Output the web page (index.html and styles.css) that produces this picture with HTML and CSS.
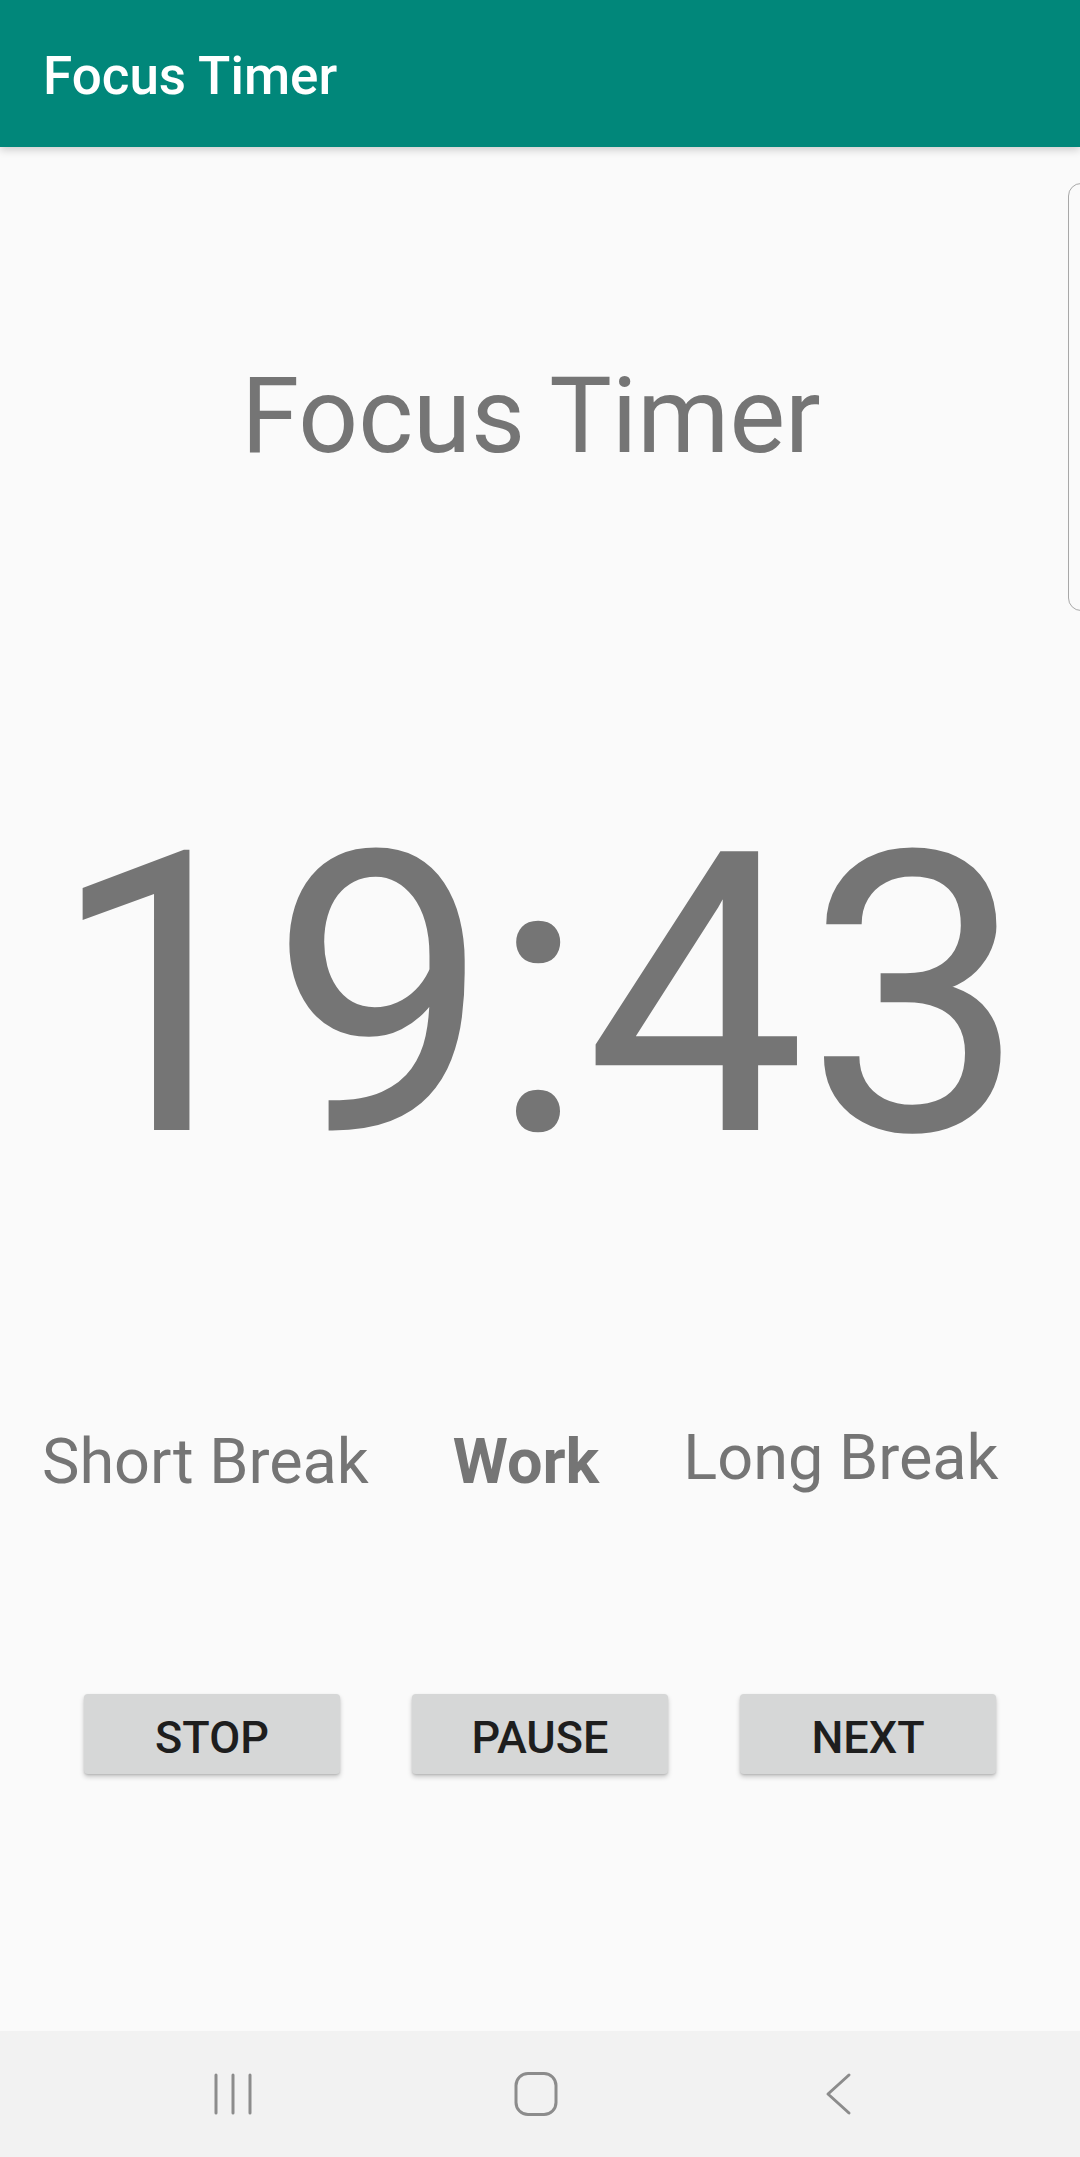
FILE: index.html
```html
<!DOCTYPE html>
<html>
<head>
<meta charset="utf-8">
<link rel="stylesheet" href="styles.css">
</head>
<body>
<div class="screen">
  <header class="appbar"><span class="appbar-title">Focus Timer</span></header>
  <main class="content">
    <div class="scroll-edge"></div>
    <h1 class="heading">Focus Timer</h1>
    <div class="timer">19:43</div>
    <div class="modes">
      <span class="mode">Short Break</span>
      <span class="mode mode-active">Work</span>
      <span class="mode mode-long">Long Break</span>
    </div>
    <div class="actions">
      <button class="btn">STOP</button>
      <button class="btn">PAUSE</button>
      <button class="btn">NEXT</button>
    </div>
  </main>
  <nav class="navbar">
    <div class="nav-cell">
      <svg width="40" height="44" viewBox="0 0 40 44"><g stroke="#8c8c8c" stroke-width="3" stroke-linecap="round"><line x1="3" y1="3" x2="3" y2="41"/><line x1="20" y1="3" x2="20" y2="41"/><line x1="37" y1="3" x2="37" y2="41"/></g></svg>
    </div>
    <div class="nav-cell">
      <svg width="46" height="46" viewBox="0 0 46 46"><rect x="3" y="2.5" width="40" height="41" rx="12" ry="12" fill="none" stroke="#8c8c8c" stroke-width="3"/></svg>
    </div>
    <div class="nav-cell">
      <svg width="30" height="44" viewBox="0 0 30 44"><polyline points="25,3 4,22 25,41" fill="none" stroke="#8c8c8c" stroke-width="3" stroke-linecap="round" stroke-linejoin="round"/></svg>
    </div>
  </nav>
</div>
</body>
</html>
```

FILE: styles.css
```css
html, body {
  margin: 0;
  padding: 0;
}
body {
  background: #fafafa;
  font-family: Roboto, "Noto Sans", "Liberation Sans", sans-serif;
}
.screen {
  width: 1080px;
  height: 2157px;
  display: flex;
  flex-direction: column;
  overflow: hidden;
}
.appbar {
  height: 147px;
  box-sizing: border-box;
  padding: 50px 0 0 43px;
  background: #01877a;
  box-shadow: 0 3px 8px rgba(0, 0, 0, 0.18);
  position: relative;
  z-index: 2;
  flex: none;
}
.appbar-title {
  color: #ffffff;
  font-size: 53px;
  font-weight: 500;
  line-height: 1;
  display: block;
}
.content {
  flex: 1;
  position: relative;
  display: flex;
  flex-direction: column;
  background: #fafafa;
}
.scroll-edge {
  position: absolute;
  top: 36px;
  right: -30px;
  width: 40px;
  height: 426px;
  border: 1.5px solid #a8a8a8;
  border-radius: 13px;
}
.heading {
  margin: 217px 0 0 0;
  padding-right: 18px;
  text-align: center;
  font-size: 105px;
  font-weight: 400;
  line-height: 1;
  color: #757575;
}
.timer {
  margin-top: 331px;
  padding-right: 4px;
  text-align: center;
  font-size: 392px;
  line-height: 1;
  color: #757575;
}
.modes {
  margin-top: 238px;
  display: flex;
  align-items: flex-start;
  gap: 84px;
  padding-left: 42px;
}
.mode {
  font-size: 63px;
  line-height: 1;
  color: #757575;
}
.mode-active {
  font-weight: 700;
}
.mode-long {
  margin-top: -4px;
}
.actions {
  margin-top: 201px;
  display: flex;
  justify-content: center;
  gap: 72px;
}
.btn {
  width: 256px;
  height: 80px;
  border: none;
  border-radius: 4px;
  background: #d6d7d7;
  box-shadow: 0 3px 5px rgba(0, 0, 0, 0.2), 0 1px 2px rgba(0, 0, 0, 0.12);
  font-family: Roboto, "Noto Sans", "Liberation Sans", sans-serif;
  font-size: 45px;
  font-weight: 500;
  color: #1e1e1e;
  padding: 6px 0 0 0;
}
.navbar {
  height: 126px;
  flex: none;
  background: #f2f2f2;
  display: grid;
  grid-template-columns: 303px 303px 303px;
  padding-left: 81px;
  align-items: center;
}
.nav-cell {
  display: flex;
  justify-content: center;
  align-items: center;
}
```
